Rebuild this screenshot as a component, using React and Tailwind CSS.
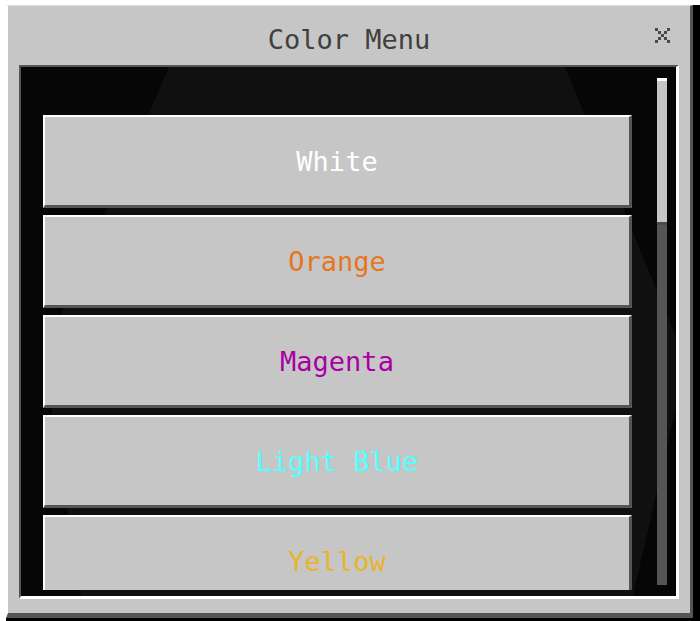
const colors = [
  { label: "White", tone: "text-[#ffffff]" },
  { label: "Orange", tone: "text-[#e6761c]" },
  { label: "Magenta", tone: "text-[#a800a4]" },
  { label: "Light Blue", tone: "text-[#55ffff]" },
  { label: "Yellow", tone: "text-[#e8b52a]" },
];

function CloseIcon() {
  const cells = [
    [0, 0], [4, 0], [1, 1], [3, 1], [2, 2], [1, 3], [3, 3], [0, 4], [4, 4],
  ];
  return (
    <svg width="15" height="15" viewBox="0 0 15 15" shapeRendering="crispEdges">
      {cells.map(([x, y]) => (
        <rect key={`${x}-${y}`} x={x * 3} y={y * 3} width="3" height="3" fill="#4a4a4a" />
      ))}
    </svg>
  );
}

function Backdrop() {
  // faint panorama shape behind the list
  return (
    <svg
      className="pointer-events-none absolute inset-0"
      width="655"
      height="529"
      viewBox="0 0 655 529"
    >
      <polygon points="148,0 544,0 655,270 655,340 612,529 60,529 30,340 30,270" fill="#101010" />
    </svg>
  );
}

export default function App() {
  return (
    <div
      className="h-[621px] w-[700px] bg-white pl-[6px] pt-[5px]"
      style={{ fontFamily: '"DejaVu Sans Mono", monospace' }}
    >
      <div className="h-[616px] w-[694px] bg-black pb-[3px] pr-[7px]">
        <div className="relative flex h-[613px] w-[687px] flex-col border-b-[5px] border-l-2 border-r-[3px] border-t border-b-[#555555] border-l-white border-r-[#555555] border-t-[#dcdcdc] bg-[#c6c6c6]">
          <div className="flex h-[59px] items-center justify-center pt-[8px]">
            <span className="text-[27px] leading-none text-[#404040]">Color Menu</span>
          </div>
          <div className="absolute right-[20px] top-[22px]">
            <CloseIcon />
          </div>

          <div className="mx-[11px] h-[534px] border-b-[3px] border-l-2 border-r-[3px] border-t-2 border-b-white border-l-[#555555] border-r-white border-t-[#555555] bg-[#060606]">
            <div className="relative flex h-full pl-[22px]">
              <Backdrop />
              <div className="relative mb-[6px] w-[589px] overflow-hidden pt-[48px]">
                <div className="flex flex-col gap-[7px]">
                  {colors.map((item) => (
                    <div
                      key={item.label}
                      className="flex h-[93px] shrink-0 items-center justify-center border-b-[3px] border-l-2 border-r-[3px] border-t-2 border-b-[#555555] border-l-white border-r-[#555555] border-t-white bg-[#c6c6c6]"
                    >
                      <span className={`text-[27px] leading-none ${item.tone}`}>{item.label}</span>
                    </div>
                  ))}
                </div>
              </div>
              <div className="relative ml-[25px] mt-[11px] flex h-[507px] w-[10px] flex-col bg-[#555555]">
                <div className="h-[147px] border-b-[3px] border-t-[3px] border-b-[#4a4a4a] border-t-white bg-[#c6c6c6]" />
              </div>
            </div>
          </div>
        </div>
      </div>
    </div>
  );
}
